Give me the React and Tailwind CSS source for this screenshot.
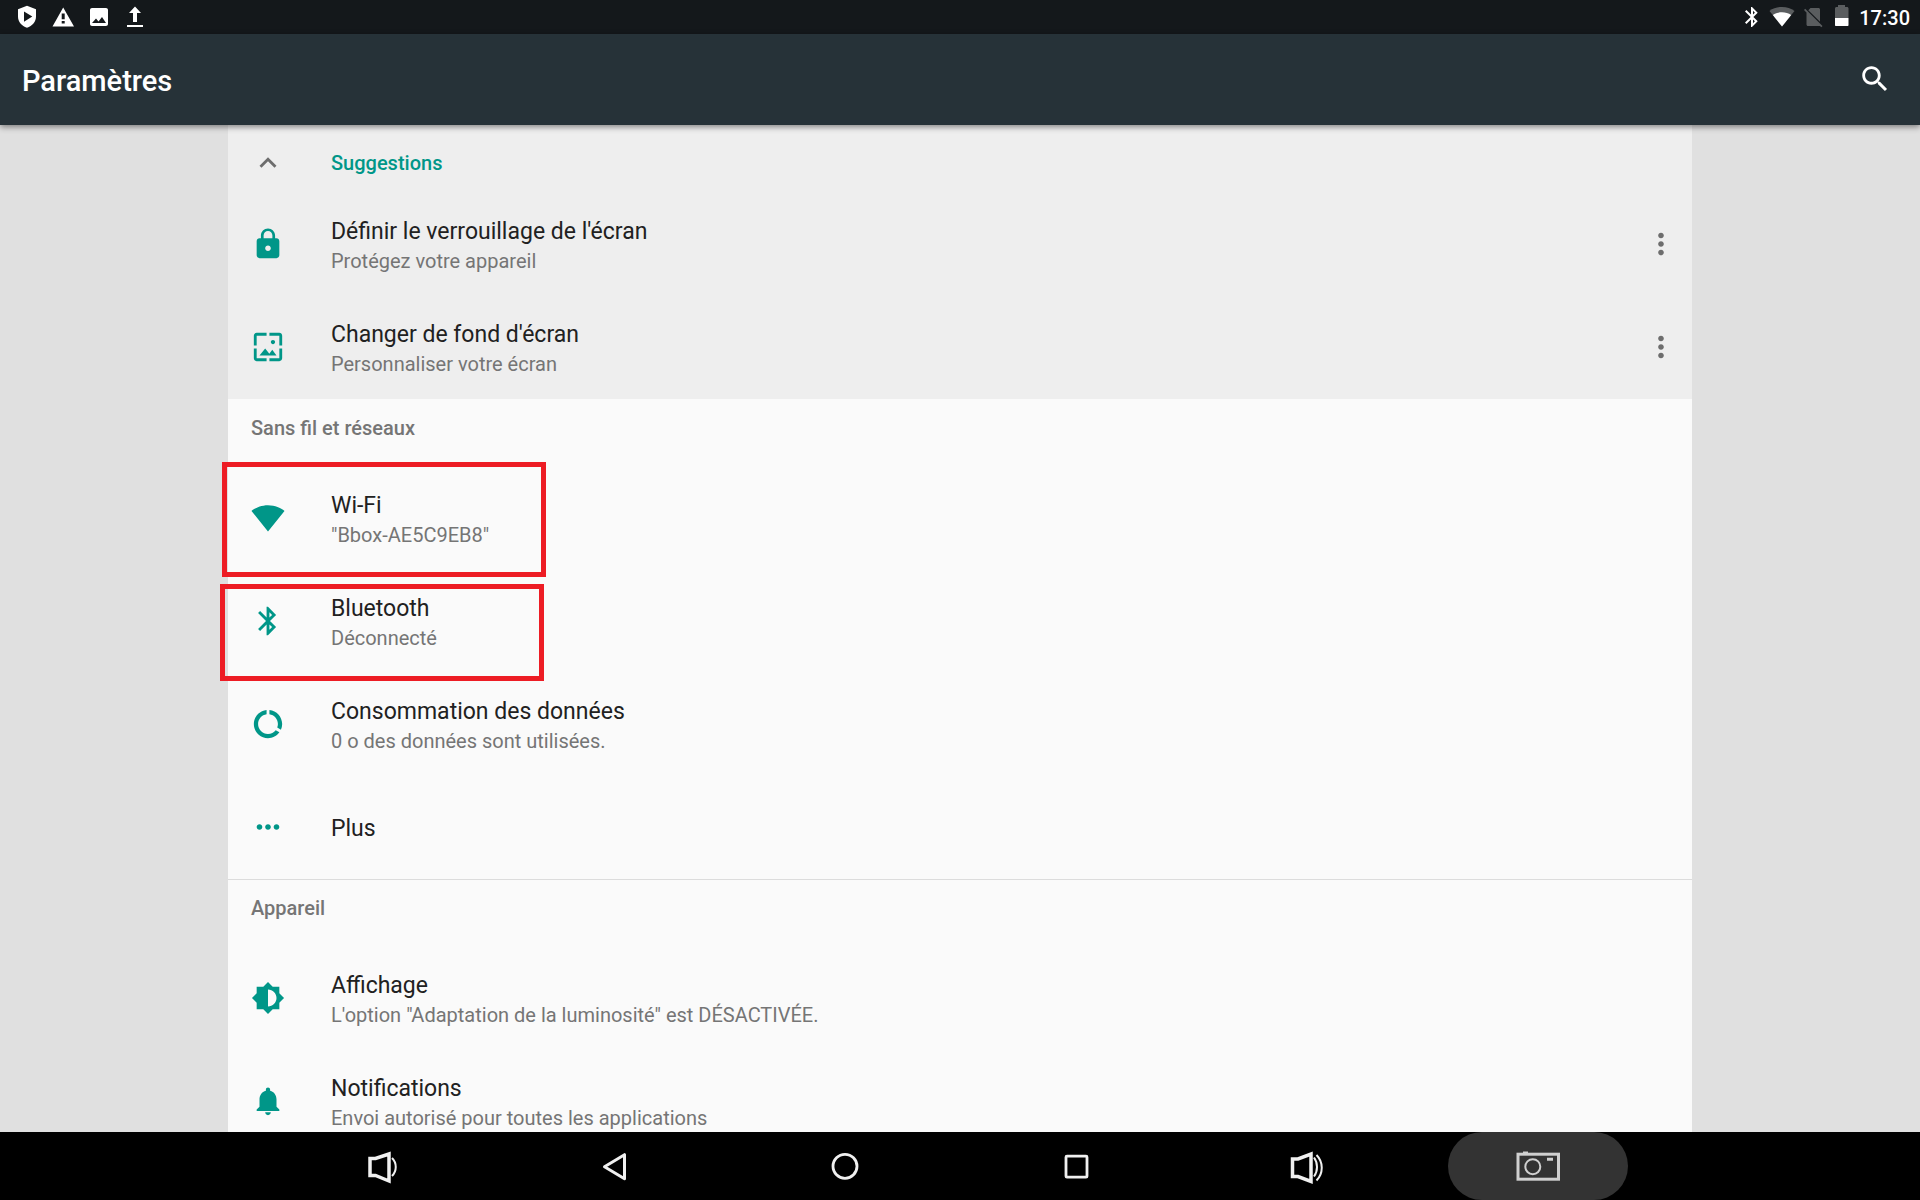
import React from 'react';

const LOCK = 'M18 8h-1V6c0-2.76-2.24-5-5-5S7 3.24 7 6v2H6c-1.1 0-2 .9-2 2v10c0 1.1.9 2 2 2h12c1.1 0 2-.9 2-2V10c0-1.1-.9-2-2-2zm-6 9c-1.1 0-2-.9-2-2s.9-2 2-2 2 .9 2 2-.9 2-2 2zm3.1-9H8.9V6c0-1.71 1.39-3.1 3.1-3.1 1.71 0 3.1 1.39 3.1 3.1v2z';
const WALLPAPER = 'M4 4h7V2H4c-1.1 0-2 .9-2 2v7h2V4zm6 9l-4 5h12l-3-4-2.03 2.71L10 13zm7-4.5c0-.83-.67-1.5-1.5-1.5S14 7.67 14 8.5s.67 1.5 1.5 1.5S17 9.33 17 8.5zM20 2h-7v2h7v7h2V4c0-1.1-.9-2-2-2zm0 18h-7v2h7c1.1 0 2-.9 2-2v-7h-2v7zM4 13H2v7c0 1.1.9 2 2 2h7v-2H4v-7z';
const WIFI = 'M12.01 21.49L23.64 7c-.45-.34-4.93-4-11.64-4C5.28 3 .81 6.66.36 7l11.63 14.49.01.01.01-.01z';
const BLUETOOTH = 'M17.71 7.71L12 2h-1v7.59L6.41 5 5 6.41 10.59 12 5 17.59 6.41 19 11 14.41V22h1l5.71-5.71-4.3-4.29 4.3-4.29zM13 5.83l1.88 1.88L13 9.59V5.83zm1.88 10.46L13 18.17v-3.76l1.88 1.88z';
const DATA = 'M13 2.05v3.03c3.39.49 6 3.39 6 6.92 0 .9-.18 1.75-.48 2.54l2.6 1.53c.56-1.24.88-2.62.88-4.07 0-5.18-3.95-9.45-9-9.95zM12 19c-3.87 0-7-3.13-7-7 0-3.53 2.61-6.43 6-6.92V2.05c-5.06.5-9 4.76-9 9.95 0 5.52 4.47 10 9.99 10 3.31 0 6.24-1.61 8.06-4.09l-2.6-1.53C16.17 17.98 14.21 19 12 19z';
const MORE_HORIZ = 'M6 10c-1.1 0-2 .9-2 2s.9 2 2 2 2-.9 2-2-.9-2-2-2zm12 0c-1.1 0-2 .9-2 2s.9 2 2 2 2-.9 2-2-.9-2-2-2zm-6 0c-1.1 0-2 .9-2 2s.9 2 2 2 2-.9 2-2-.9-2-2-2z';
const MORE_VERT = 'M12 8c1.1 0 2-.9 2-2s-.9-2-2-2-2 .9-2 2 .9 2 2 2zm0 2c-1.1 0-2 .9-2 2s.9 2 2 2 2-.9 2-2-.9-2-2-2zm0 6c-1.1 0-2 .9-2 2s.9 2 2 2 2-.9 2-2-.9-2-2-2z';
const BRIGHTNESS = 'M20 15.31L23.31 12 20 8.69V4h-4.69L12 .69 8.69 4H4v4.69L.69 12 4 15.31V20h4.69L12 23.31 15.31 20H20v-4.69zM12 18V6c3.31 0 6 2.69 6 6s-2.69 6-6 6z';
const BELL = 'M12 22c1.1 0 2-.9 2-2h-4c0 1.1.89 2 2 2zm6-6v-5c0-3.07-1.64-5.64-4.5-6.32V4c0-.83-.67-1.5-1.5-1.5s-1.5.67-1.5 1.5v.68C7.63 5.36 6 7.92 6 11v5l-2 2v1h16v-1l-2-2z';
const SEARCH = 'M15.5 14h-.79l-.28-.27C15.41 12.59 16 11.11 16 9.5 16 5.91 13.09 3 9.5 3S3 5.91 3 9.5 5.91 16 9.5 16c1.61 0 3.09-.59 4.23-1.57l.27.28v.79l5 4.99L20.49 19l-4.99-5zm-6 0C7.01 14 5 11.99 5 9.5S7.01 5 9.5 5 14 7.01 14 9.5 11.99 14 9.5 14z';
const CHEVRON_UP = 'M12 8l-6 6 1.41 1.41L12 10.83l4.59 4.58L18 14z';

const suggestions = [
  { title: "Définir le verrouillage de l'écran", summary: 'Protégez votre appareil', icon: LOCK },
  { title: "Changer de fond d'écran", summary: 'Personnaliser votre écran', icon: WALLPAPER },
];

const sections = [
  {
    name: 'Sans fil et réseaux',
    items: [
      { title: 'Wi-Fi', summary: '"Bbox-AE5C9EB8"', icon: WIFI, frame: '-left-[6px] -top-[4px] h-[115px]' },
      { title: 'Bluetooth', summary: 'Déconnecté', icon: BLUETOOTH, frame: '-left-[8px] top-[15px] h-[97px]' },
      { title: 'Consommation des données', summary: '0 o des données sont utilisées.', icon: DATA },
      { title: 'Plus', icon: MORE_HORIZ },
    ],
  },
  {
    name: 'Appareil',
    items: [
      { title: 'Affichage', summary: 'L\'option "Adaptation de la luminosité" est DÉSACTIVÉE.', icon: BRIGHTNESS },
      { title: 'Notifications', summary: 'Envoi autorisé pour toutes les applications', icon: BELL },
    ],
  },
];

function Icon({ path, className = 'size-[34px]' }) {
  return (
    <svg viewBox="0 0 24 24" fill="currentColor" aria-hidden="true" className={`shrink-0 ${className}`}>
      <path d={path} />
    </svg>
  );
}

function StatusBar() {
  return (
    <div className="flex h-[34px] shrink-0 items-center justify-between bg-[#14181b] pl-4 pr-[10px] text-white">
      <div className="flex items-center gap-3">
        <svg viewBox="0 0 24 24" className="size-6" fill="currentColor">
          <path fillRule="evenodd" d="M11 .8l9 3.4v7.3c0 5.3-3.7 9.4-9 11.3-5.3-1.9-9-6-9-11.3V4.2zM8 6.500v10.200l8.300-5.100z" />
        </svg>
        <svg viewBox="0 0 24 24" className="size-6" fill="currentColor">
          <path d="M.5 21.500h21.500L11.200 2.500zM12.700 18.500h-3v-2.600h3zm0-4.200h-3V8.500h3z" fillRule="evenodd" />
        </svg>
        <svg viewBox="0 0 24 24" className="size-6" fill="currentColor">
          <path d="M20 19V5c0-1.100-.9-2-2-2H4c-1.100 0-2 .9-2 2v14c0 1.100.9 2 2 2h14c1.100 0 2-.9 2-2zM8 13.500l2.500 3 3.500-4.500 4 6H4z" fillRule="evenodd" />
        </svg>
        <svg viewBox="0 0 24 24" className="size-6" fill="currentColor">
          <path d="M11 1.500l6 6.500h-4v9H9V8H5zM3 20h16v2H3z" />
        </svg>
      </div>
      <div className="flex items-center">
        <Icon path={BLUETOOTH} className="mr-[5px] size-6" />
        <svg viewBox="0 0 26 24" className="mr-[7px] h-6 w-[26px]" fill="currentColor">
          <path opacity=".3" d="M13 21.500L.5 6C4 3.300 8.200 2 13 2s9 1.300 12.500 4z" />
          <path d="M13 21.500L3.800 10C6.500 8.200 9.500 7.300 13 7.300s6.500.9 9.200 2.700z" />
        </svg>
        <svg viewBox="0 0 24 24" className="mr-1 size-6" fill="currentColor">
          <path opacity=".3" d="M8.500 3h8c.8 0 1.500.7 1.500 1.500v12.300L6.300 5.200zM2 5l1.200-1.200L20.500 21l-1.200 1.200L18 21H6c-.8 0-1.500-.7-1.500-1.500v-12z" />
        </svg>
        <svg viewBox="0 0 24 24" className="mr-[5px] size-6" fill="currentColor">
          <path opacity=".3" d="M5 13V3.500C5 2.700 5.700 2 6.500 2H8V0h7v2h2c.8 0 1.500.7 1.500 1.500V13z" />
          <path d="M5 13h13.500v7c0 .6-.4 1-1 1H6c-.6 0-1-.4-1-1z" />
        </svg>
        <time className="pt-[2px] text-[20px] font-medium leading-6">17:30</time>
      </div>
    </div>
  );
}

function Row({ item, menu }) {
  return (
    <li className="relative flex h-[103px] items-center pl-[23px] pr-[14px]">
      <a href="#" className="flex min-w-0 flex-1 items-center gap-[46px]">
        <Icon path={item.icon} className="size-[34px] text-[#009688]" />
        <span className="flex flex-col pt-[4px]">
          <span className="text-[23px] leading-[30px] text-[#212121]">{item.title}</span>
          {item.summary && <span className="text-[20px] leading-[28px] text-[#757575]">{item.summary}</span>}
        </span>
      </a>
      {menu && (
        <button type="button" aria-label={`Options : ${item.title}`} className="text-[#6d6d6d]">
          <Icon path={MORE_VERT} />
        </button>
      )}
      {item.frame && (
        <span className={`pointer-events-none absolute z-10 w-[324px] border-5 border-[#ed1c24] ${item.frame}`} />
      )}
    </li>
  );
}

function NavButton({ label, active, children }) {
  return (
    <button type="button" aria-label={label} className="flex h-full flex-1 items-center justify-center">
      <span className={`flex h-full w-[180px] items-center justify-center rounded-full ${active ? 'bg-[#333333]' : ''}`}>
        <svg viewBox="0 0 48 48" className="size-12" fill="none" stroke={active ? '#d0d0d0' : '#f0f0f0'} strokeWidth="3">
          {children}
        </svg>
      </span>
    </button>
  );
}

function NavBar() {
  return (
    <nav className="flex h-[68px] shrink-0 justify-center bg-black">
      <div className="flex w-full max-w-[1386px]">
        <NavButton label="Baisser le volume">
          <path strokeWidth="3.500" d="M11 16.500h5.500L30 12v27l-13.500-5.500H11z" />
          <path strokeWidth="2" d="M33 16c5 5 5 13 0 18" />
        </NavButton>
        <NavButton label="Retour">
          <path strokeWidth="3" strokeLinejoin="round" d="M14.500 24.700l20-12v24z" />
        </NavButton>
        <NavButton label="Accueil">
          <circle cx="24" cy="24.300" r="12" strokeWidth="2.800" />
        </NavButton>
        <NavButton label="Applications récentes">
          <rect x="14" y="14.200" width="21" height="21" rx="1" strokeWidth="2.800" />
        </NavButton>
        <NavButton label="Augmenter le volume">
          <path strokeWidth="3.500" d="M9.500 17H15l13-5v27.500L15 34.500H9.500z" />
          <path strokeWidth="2" d="M31 15.500c4 5.500 4 13.500 0 19M33.500 13c7 7 7 18.500 0 25.500" />
        </NavButton>
        <NavButton label="Capture d'écran" active>
          <rect x="4" y="12.200" width="40.500" height="25" />
          <circle cx="18.800" cy="24.700" r="7.500" strokeWidth="2" />
          <path d="M9 11h5M33 17.300h6" />
        </NavButton>
      </div>
    </nav>
  );
}

export default function App() {
  return (
    <div className="flex h-screen flex-col overflow-hidden bg-[#e0e0e0] font-['Roboto',sans-serif]">
      <StatusBar />
      <header className="relative z-20 flex h-[91px] shrink-0 items-center justify-between bg-[#263238] pl-[22px] pr-[28px] text-white shadow-[0_2px_6px_rgba(0,0,0,0.45)]">
        <h1 className="pt-[3px] text-[29px] font-medium leading-9">Paramètres</h1>
        <button type="button" aria-label="Rechercher" className="pb-[2px]">
          <Icon path={SEARCH} />
        </button>
      </header>

      <main className="min-h-0 flex-1 px-[228px]">
        <div className="bg-[#fafafa]">
          <section className="bg-[#eeeeee] pb-px">
            <button type="button" className="flex h-[67px] w-full items-center gap-[46px] px-[23px] pt-[8px] text-[20px] font-medium text-[#009688]">
              <Icon path={CHEVRON_UP} className="size-[34px] text-[#6d6d6d]" />
              Suggestions
            </button>
            <ul>
              {suggestions.map((item) => (
                <Row key={item.title} item={item} menu />
              ))}
            </ul>
          </section>

          {sections.map((section) => (
            <section key={section.name} className="border-t border-[#dcdcdc] pb-px first-of-type:border-transparent nth-of-type-[2]:border-transparent">
              <h2 className="h-[66px] px-[23px] pt-[13px] text-[20px] font-medium leading-[30px] text-[#757575]">{section.name}</h2>
              <ul>
                {section.items.map((item) => (
                  <Row key={item.title} item={item} />
                ))}
              </ul>
            </section>
          ))}
        </div>
      </main>

      <div className="relative z-20 shrink-0">
        <NavBar />
      </div>
    </div>
  );
}
